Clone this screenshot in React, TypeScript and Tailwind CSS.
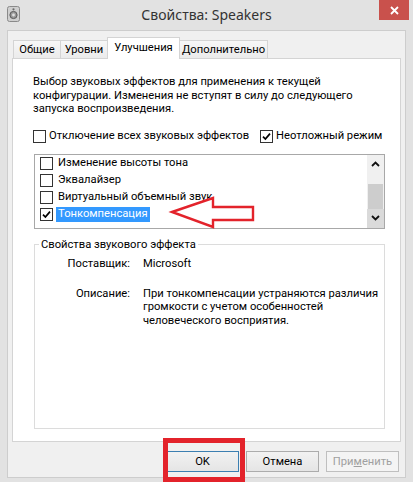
import React from "react";

function Cb({ checked }: { checked?: boolean }) {
  return (
    <span className="w-[13px] h-[13px] border border-[#333333] bg-white flex items-center justify-center shrink-0">
      {checked && (
        <svg width="9" height="9" viewBox="0 0 9 9">
          <path d="M1 4.6 L3.4 7 L8 1.6" stroke="#000" strokeWidth="1.7" fill="none" />
        </svg>
      )}
    </span>
  );
}

function Chevron({ up }: { up?: boolean }) {
  return (
    <svg width="9" height="6" viewBox="0 0 9 6">
      <path d={up ? "M1 5 L4.5 1.5 L8 5" : "M1 1 L4.5 4.5 L8 1"} stroke="#111" strokeWidth="1.8" fill="none" />
    </svg>
  );
}

export default function App() {
  const items = [
    { label: "Изменение высоты тона", checked: false },
    { label: "Эквалайзер", checked: false },
    { label: "Виртуальный объемный звук", checked: false },
    { label: "Тонкомпенсация", checked: true, selected: true },
  ];
  return (
    <div className="w-[413px] h-[482px] bg-[#e2e2e2] flex flex-col overflow-hidden relative text-[11.2px] leading-[13.5px] text-black font-['Roboto',sans-serif] whitespace-nowrap">
      {/* title bar */}
      <div className="h-[30px] grid grid-cols-[1fr_auto_1fr] items-start shrink-0">
        <div className="pl-[7px] pt-[6px]">
          <svg width="13" height="16" viewBox="0 0 13 16">
            <rect x="0.5" y="0.5" width="12" height="15" rx="2" fill="#cfcfcf" stroke="#8a8a8a" />
            <circle cx="6.5" cy="9" r="3.6" fill="#9a9a9a" stroke="#5a5a5a" />
            <circle cx="6.5" cy="9" r="1.4" fill="#e0e0e0" />
            <circle cx="6.5" cy="3.3" r="1.1" fill="#6a6a6a" />
          </svg>
        </div>
        <div className="pt-[5px] text-[14px] leading-[19px] text-[#333333] font-['Noto_Sans',sans-serif]">Свойства: Speakers</div>
        <div className="flex justify-end pr-[4px]">
          <div className="w-[30px] h-[20px] bg-[#c9514c] flex items-center justify-center">
            <svg width="9" height="9" viewBox="0 0 9 9">
              <path d="M1 1 L8 8 M8 1 L1 8" stroke="#fff" strokeWidth="1.8" />
            </svg>
          </div>
        </div>
      </div>

      {/* client area */}
      <div className="mx-[7px] h-[448px] bg-[#f0f0f0] border border-[#cdcdcd] flex flex-col px-[4px] pt-[6px]">
        {/* tabs */}
        <div className="h-[22px] flex items-end pl-[1px]">
          <div className="w-[48px] h-[18px] mb-[1px] border border-b-0 border-[#d4d4d4] bg-gradient-to-b from-[#f7f7f7] to-[#ebebeb] flex items-center justify-center">Общие</div>
          <div className="w-[48px] h-[18px] mb-[1px] -ml-[1px] border border-b-0 border-[#d4d4d4] bg-gradient-to-b from-[#f7f7f7] to-[#ebebeb] flex items-center justify-center">Уровни</div>
          <div className="w-[73px] h-[22px] -ml-[1px] relative z-10 border border-b-0 border-[#d4d4d4] bg-white flex items-start justify-center pt-[3px]">Улучшения</div>
          <div className="w-[89px] h-[18px] mb-[1px] -ml-[1px] border border-b-0 border-[#d4d4d4] bg-gradient-to-b from-[#f7f7f7] to-[#ebebeb] flex items-center justify-center">Дополнительно</div>
        </div>

        {/* panel */}
        <div className="-mt-[1px] w-[389px] h-[384px] bg-white border border-[#d4d4d4] px-[20px] pt-[16px] flex flex-col">
          <p>
            Выбор звуковых эффектов для применения к текущей
            <br />
            конфигурации. Изменения не вступят в силу до следующего
            <br />
            запуска воспроизведения.
          </p>
          <div className="mt-[14px] h-[13px] flex items-center">
            <Cb />
            <span className="ml-[3px]">Отключение всех звуковых эффектов</span>
            <span className="ml-[11px]"><Cb checked /></span>
            <span className="ml-[3px]">Неотложный режим</span>
          </div>

          {/* list */}
          <div className="mt-[11px] ml-[1px] w-[351px] h-[75px] border border-[#a8a8a8] flex">
            <div className="flex-1 flex flex-col">
              {items.map((it) => (
                <div key={it.label} className="h-[17px] flex items-center pl-[5px]">
                  <Cb checked={it.checked} />
                  <span
                    className={
                      it.selected
                        ? "ml-[3px] h-[15px] px-[2px] flex items-center bg-[#3399ff] text-white"
                        : "ml-[5px]"
                    }
                  >
                    {it.label}
                  </span>
                </div>
              ))}
            </div>
            <div className="w-[17px] bg-[#f0f0f0] flex flex-col">
              <div className="h-[19px] flex items-center justify-center">
                <Chevron up />
              </div>
              <div className="h-[10px]" />
              <div className="h-[25px] mx-[1px] bg-[#cdcdcd]" />
              <div className="flex-1 bg-[#dadada] flex items-center justify-center">
                <Chevron />
              </div>
            </div>
          </div>

          {/* group box */}
          <fieldset className="mt-[9px] ml-[1px] w-[351px] h-[191px] border border-[#dcdcdc]">
            <legend className="ml-[4px] px-[2px]">Свойства звукового эффекта</legend>
            <div className="grid grid-cols-[95px_1fr] gap-x-[13px] mt-[6px]">
              <div className="text-right">Поставщик:</div>
              <div>Microsoft</div>
              <div className="text-right mt-[16px]">Описание:</div>
              <div className="mt-[16px]">
                При тонкомпенсации устраняются различия
                <br />
                громкости с учетом особенностей
                <br />
                человеческого восприятия.
              </div>
            </div>
          </fieldset>
        </div>

        {/* buttons */}
        <div className="mt-[9px] flex justify-end gap-[7px] pr-[2px]">
          <div className="w-[73px] h-[21px] border border-[#3c7fb1] bg-gradient-to-b from-[#f2f2f2] to-[#e5e5e5] flex items-center justify-center">OK</div>
          <div className="w-[73px] h-[21px] border border-[#acacac] bg-gradient-to-b from-[#f2f2f2] to-[#e5e5e5] flex items-center justify-center">Отмена</div>
          <div className="w-[73px] h-[21px] border border-[#bfbfbf] bg-[#f4f4f4] text-[#a0a0a0] flex items-center justify-center">
            <span>При<span className="underline">м</span>енить</span>
          </div>
        </div>
      </div>

      {/* annotation: red arrow */}
      <svg className="absolute left-0 top-0 pointer-events-none" width="413" height="482" viewBox="0 0 413 482">
        <path
          d="M172 212 L213 198 L213 207 L253 207 L253 220 L213 220 L213 227 Z"
          fill="none"
          stroke="#e3232b"
          strokeWidth="2.4"
          strokeLinejoin="miter"
        />
      </svg>
      {/* annotation: red box around OK */}
      <div className="absolute left-[163px] top-[438px] w-[82px] h-[44px] border-[5px] border-[#e3232b] pointer-events-none" />
    </div>
  );
}
